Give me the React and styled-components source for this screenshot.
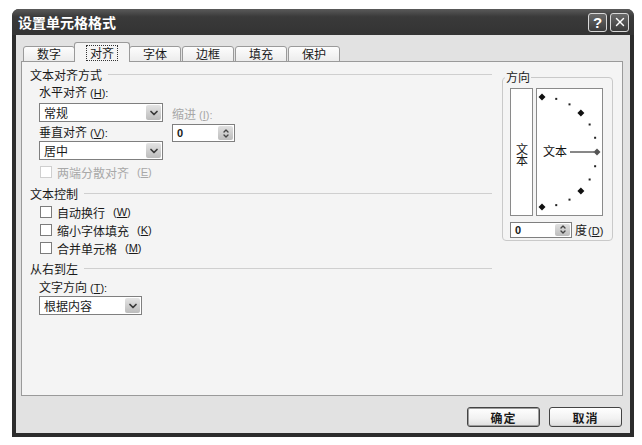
import React from 'react'
import styled, { createGlobalStyle } from 'styled-components'
import { ChevronDown, ChevronUp, X } from 'lucide-react'

const FONT = `"Noto Sans CJK SC", "Liberation Sans", sans-serif`

const Global = createGlobalStyle`
  body {
    margin: 0;
    background: #fff;
    font-family: ${FONT};
    font-size: 12px;
    color: #1a1a1a;
  }
`

const Window = styled.div`
  margin: 9px 0 0 12px;
  width: 622px;
  height: 428px;
  display: flex;
  flex-direction: column;
  border-radius: 7px 7px 0 0;
  overflow: hidden;
  background: #2c2c2c;
`

const TitleBar = styled.div`
  height: 26px;
  flex: none;
  display: flex;
  align-items: center;
  justify-content: space-between;
  padding: 0 5px 0 6px;
  background: linear-gradient(#5a5a5a, #3a3a3a 30%, #333 100%);
  color: #fff;
  font-weight: 700;
  font-size: 14px;
`

const Caption = styled.span`
  letter-spacing: 0;
`

const CaptionButtons = styled.div`
  display: flex;
  gap: 3px;
`

const CaptionButton = styled.span`
  width: 19px;
  height: 19px;
  box-sizing: border-box;
  border: 1px solid #d8d8d8;
  border-radius: 3px;
  background: linear-gradient(#6a6a6a, #3c3c3c);
  display: flex;
  align-items: center;
  justify-content: center;
  color: #fff;
  font-family: "Liberation Sans", sans-serif;
  font-size: 15px;
  font-weight: 700;
`

const Body = styled.div`
  flex: 1;
  margin: 0 4px 4px;
  background: #e2e2e2;
  padding: 8px 7px 0 5px;
  display: flex;
  flex-direction: column;
`

const TabRow = styled.div`
  display: flex;
  align-items: flex-end;
  gap: 1px;
  height: 19px;
  padding-left: 2px;
  margin-bottom: -1px;
  position: relative;
  z-index: 1;
`

const Tab = styled.div`
  width: ${p => (p.$active ? 56 : 52)}px;
  height: ${p => (p.$active ? 20 : 16)}px;
  margin: ${p => (p.$active ? '0 -2px' : '0')};
  box-sizing: border-box;
  border: 1px solid #9a9a9a;
  border-bottom: ${p => (p.$active ? 'none' : '1px solid #9a9a9a')};
  border-radius: 3px 3px 0 0;
  background: ${p => (p.$active ? '#f4f4f4' : 'linear-gradient(#fdfdfd, #ececec)')};
  display: flex;
  align-items: center;
  justify-content: center;
  position: relative;
  z-index: ${p => (p.$active ? 2 : 1)};
`

const TabLabel = styled.span`
  line-height: 14px;
  padding: 0 3px;
  border: 1px dotted ${p => (p.$focus ? '#333' : 'transparent')};
`

const Panel = styled.div`
  height: 335px;
  box-sizing: border-box;
  border: 1px solid #9a9a9a;
  background: #f4f4f4;
  display: flex;
  gap: 10px;
  padding: 3px 9px 0 8px;
`

const LeftCol = styled.div`
  width: 462px;
  display: flex;
  flex-direction: column;
`

const GroupHeader = styled.div`
  display: flex;
  align-items: center;
  height: 18px;
  margin-top: ${p => p.$mt || 0}px;
  &::after {
    content: '';
    flex: 1;
    margin-left: 6px;
    border-top: 1px solid #cfcfcf;
  }
`

const Indent = styled.div`
  padding-left: 9px;
  display: flex;
  flex-direction: column;
`

const AlignBlock = styled.div`
  padding-left: 9px;
  display: flex;
  gap: 9px;
`

const Stack = styled.div`
  display: flex;
  flex-direction: column;
  padding-top: ${p => p.$pt || 0}px;
`

const Label = styled.div`
  height: 18px;
  line-height: 18px;
  margin-top: ${p => p.$mt || 0}px;
  color: ${p => (p.$disabled ? '#a8a8a8' : '#1a1a1a')};
  white-space: nowrap;
`

const Key = styled.span`
  font-family: "Liberation Sans", sans-serif;
  font-size: 11px;
  margin-left: ${p => p.$gap ?? 3}px;
`

const Select = styled.div`
  width: ${p => p.$w}px;
  height: 19px;
  margin-top: ${p => p.$mt || 0}px;
  box-sizing: border-box;
  border: 1px solid #7f7f7f;
  background: #fff;
  display: flex;
  align-items: center;
  justify-content: space-between;
  padding: 0 1px 0 4px;
`

const DropButton = styled.span`
  width: 15px;
  height: 15px;
  border-radius: 2px;
  background: linear-gradient(#e4e4e4, #bcbcbc);
  display: flex;
  align-items: center;
  justify-content: center;
  color: #3a3a3a;
`

const Spinner = styled.div`
  width: ${p => p.$w}px;
  flex: none;
  height: ${p => p.$h || 18}px;
  margin-top: ${p => p.$mt || 0}px;
  box-sizing: border-box;
  border: 1px solid #7f7f7f;
  background: #fff;
  display: flex;
  align-items: center;
  justify-content: space-between;
  padding: 0 1px 0 4px;
  font-family: "Liberation Sans", sans-serif;
  font-size: 11px;
  font-weight: 700;
`

const SpinButton = styled.span`
  width: 15px;
  height: calc(100% - 2px);
  border-radius: 2px;
  background: linear-gradient(#e0e0e0, #bdbdbd);
  display: flex;
  flex-direction: column;
  align-items: center;
  justify-content: center;
  color: #444;
  & > svg {
    margin: -1.5px 0;
  }
`

const CheckRow = styled.label`
  display: flex;
  align-items: center;
  gap: 5px;
  height: 18px;
  margin-top: ${p => p.$mt || 0}px;
  padding-left: 1px;
  color: ${p => (p.$disabled ? '#a8a8a8' : '#1a1a1a')};
`

const Box = styled.span`
  width: 12px;
  height: 12px;
  box-sizing: border-box;
  border: 1px solid ${p => (p.$disabled ? '#cfcfcf' : '#7c7c7c')};
  background: #fff;
`

const RightCol = styled.div`
  width: 111px;
  padding-top: 12px;
`

const Group = styled.div`
  position: relative;
  height: 164px;
  box-sizing: border-box;
  border: 1px solid #c9c9c9;
  border-radius: 4px;
  padding: 10px 9px 0 7px;
`

const Legend = styled.span`
  position: absolute;
  top: -9px;
  left: 2px;
  padding: 0 1px;
  line-height: 16px;
  background: #f4f4f4;
`

const Dials = styled.div`
  display: flex;
  gap: 3px;
  height: 128px;
`

const VerticalBox = styled.div`
  width: 23px;
  box-sizing: border-box;
  border: 1px solid #8a8a8a;
  background: #fff;
  display: flex;
  align-items: center;
  justify-content: center;
  padding-top: 4px;
`

const VerticalText = styled.span`
  writing-mode: vertical-rl;
  text-orientation: upright;
  line-height: 14px;
  letter-spacing: -1px;
`

const DialBox = styled.div`
  flex: 1;
  box-sizing: border-box;
  border: 1px solid #8a8a8a;
  background: #fff;
  display: flex;
`

const DegreeRow = styled.div`
  display: flex;
  align-items: center;
  gap: 3px;
  margin-top: 5px;
  white-space: nowrap;
`

const Footer = styled.div`
  display: flex;
  justify-content: flex-end;
  gap: 9px;
  padding: 11px 1px 0 0;
`

const Button = styled.div`
  width: 73px;
  height: 20px;
  box-sizing: border-box;
  border: 1px solid #444;
  border-radius: 3px;
  box-shadow: ${p => (p.$default ? 'inset 0 0 0 1px #9c9c9c' : 'inset 0 -1px 0 #cfcfcf')};
  background: linear-gradient(#ffffff, #f1f1f1 60%, #dedede);
  display: flex;
  align-items: center;
  justify-content: center;
  font-weight: 700;
  letter-spacing: 1px;
`

function Dropdown ({ w, mt, children }) {
  return (
    <Select $w={w} $mt={mt}>
      <span>{children}</span>
      <DropButton><ChevronDown size={12} strokeWidth={3.5} /></DropButton>
    </Select>
  )
}

function Spin ({ w, mt, h }) {
  return (
    <Spinner $w={w} $mt={mt} $h={h}>
      <span>0</span>
      <SpinButton>
        <ChevronUp size={8} strokeWidth={4} />
        <ChevronDown size={8} strokeWidth={4} />
      </SpinButton>
    </Spinner>
  )
}

function Dial () {
  const cx = 5
  const cy = 63
  const r = 55
  const marks = []
  for (let a = 90; a >= -90; a -= 15) {
    const rad = (a * Math.PI) / 180
    const x = cx + r * Math.cos(rad)
    const y = cy - r * Math.sin(rad)
    if (a % 45 === 0) {
      marks.push(
        <polygon key={a} points={`${x},${y - 3.5} ${x + 3.5},${y} ${x},${y + 3.5} ${x - 3.5},${y}`} fill={a === 0 ? '#555' : '#111'} />
      )
    } else {
      marks.push(<rect key={a} x={x - 1} y={y - 1} width='2' height='2' fill='#222' />)
    }
  }
  return (
    <svg width='65' height='126' viewBox='0 0 65 126'>
      {marks}
      <line x1='33' y1={cy} x2='57' y2={cy} stroke='#111' strokeWidth='1' />
      <text x='6' y={cy + 4} fontSize='12' fontFamily={FONT} fill='#111'>文本</text>
    </svg>
  )
}

const TABS = ['数字', '对齐', '字体', '边框', '填充', '保护']

export default function App () {
  return (
    <>
      <Global />
      <Window>
        <TitleBar>
          <Caption>设置单元格格式</Caption>
          <CaptionButtons>
            <CaptionButton>?</CaptionButton>
            <CaptionButton><X size={14} strokeWidth={2.5} /></CaptionButton>
          </CaptionButtons>
        </TitleBar>
        <Body>
          <TabRow>
            {TABS.map(t => (
              <Tab key={t} $active={t === '对齐'}>
                <TabLabel $focus={t === '对齐'}>{t}</TabLabel>
              </Tab>
            ))}
          </TabRow>
          <Panel>
            <LeftCol>
              <GroupHeader>文本对齐方式</GroupHeader>
              <AlignBlock>
                <Stack>
                  <Label>水平对齐<Key>(<u>H</u>):</Key></Label>
                  <Dropdown w={124} mt={2}>常规</Dropdown>
                  <Label $mt={1}>垂直对齐<Key>(<u>V</u>):</Key></Label>
                  <Dropdown w={124}>居中</Dropdown>
                  <CheckRow $mt={3} $disabled>
                    <Box $disabled />两端分散对齐<Key>(<u>E</u>)</Key>
                  </CheckRow>
                </Stack>
                <Stack $pt={22}>
                  <Label $disabled>缩进<Key>(<u>I</u>):</Key></Label>
                  <Spin w={63} mt={1} />
                </Stack>
              </AlignBlock>
              <GroupHeader $mt={3}>文本控制</GroupHeader>
              <Indent>
                <CheckRow $mt={1}><Box />自动换行<Key>(<u>W</u>)</Key></CheckRow>
                <CheckRow><Box />缩小字体填充<Key>(<u>K</u>)</Key></CheckRow>
                <CheckRow><Box />合并单元格<Key>(<u>M</u>)</Key></CheckRow>
              </Indent>
              <GroupHeader $mt={2}>从右到左</GroupHeader>
              <Indent>
                <Label $mt={1}>文字方向<Key>(<u>T</u>):</Key></Label>
                <Dropdown w={103}>根据内容</Dropdown>
              </Indent>
            </LeftCol>
            <RightCol>
              <Group>
                <Legend>方向</Legend>
                <Dials>
                  <VerticalBox>
                    <VerticalText>文本</VerticalText>
                  </VerticalBox>
                  <DialBox>
                    <Dial />
                  </DialBox>
                </Dials>
                <DegreeRow>
                  <Spin w={62} h={16} />
                  <span>度<Key $gap={1}>(<u>D</u>)</Key></span>
                </DegreeRow>
              </Group>
            </RightCol>
          </Panel>
          <Footer>
            <Button $default>确定</Button>
            <Button>取消</Button>
          </Footer>
        </Body>
      </Window>
    </>
  )
}
